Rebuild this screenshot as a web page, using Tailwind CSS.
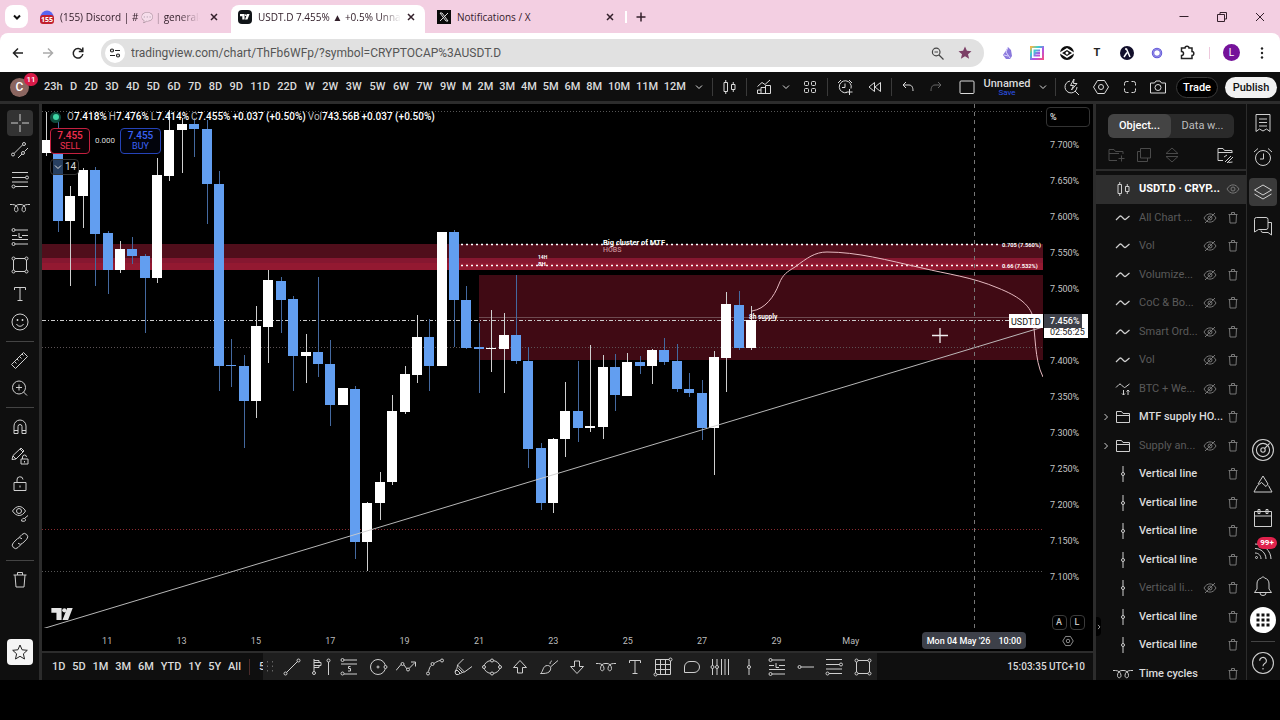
<!DOCTYPE html>
<html lang="en">
<head>
    <meta charset="UTF-8">
    <meta name="viewport" content="width=device-width, initial-scale=1.0">
    <title>USDT.D 7.455% ▲ +0.5% Unnamed</title>
    <script src="https://cdn.jsdelivr.net/npm/@tailwindcss/browser@4"></script>
</head>
<body class="bg-black h-screen overflow-hidden flex flex-col pb-10 font-['Roboto',sans-serif] text-[#dbdbdb] text-[11px] leading-4">

    <!-- Icon sprite, 20x20 grid -->
    <svg class="hidden" xmlns="http://www.w3.org/2000/svg">
        <symbol id="chevron" viewBox="0 0 20 20"><path d="M7 8.500l3 3 3-3" fill="none" stroke="currentColor"/></symbol>
        <symbol id="chevron-right" viewBox="0 0 20 20"><path d="M8.500 7l3 3-3 3" fill="none" stroke="currentColor"/></symbol>
        <symbol id="close" viewBox="0 0 20 20"><path d="M7 7l6 6M13 7l-6 6" fill="none" stroke="currentColor" stroke-width="1.500"/></symbol>
        <symbol id="cross" viewBox="0 0 20 20"><path d="M10 1v7M10 12v7M1 10h7M12 10h7" fill="none" stroke="currentColor"/></symbol>
        <symbol id="trend" viewBox="0 0 20 20"><g fill="none" stroke="currentColor"><path d="M4 12.500L12.500 4M8 17l4-4M14.500 10.500L18 7"/><circle cx="3" cy="13.500" r="1.500"/><circle cx="14" cy="3" r="1.500"/><circle cx="13" cy="12" r="1.500"/></g></symbol>
        <symbol id="fib" viewBox="0 0 20 20"><g fill="none" stroke="currentColor"><path d="M2 2.500h16M2 7.500h13.500M2 12h16M5 16.500h13"/><circle cx="17" cy="7.500" r="1.500"/><circle cx="3.500" cy="16.500" r="1.500"/></g></symbol>
        <symbol id="cycles" viewBox="0 0 20 20"><path d="M0 6.500h2.500c3.500 0 5.500 2.500 5.500 5 0 3-3.500 3-3.500 0 0-3 2-5 4.500-5h2c2.500 0 4.500 2 4.500 5 0 3-3.500 3-3.500 0 0-2.500 2-5 5.500-5H20" fill="none" stroke="currentColor"/></symbol>
        <symbol id="long" viewBox="0 0 20 20"><g fill="none" stroke="currentColor"><path d="M5 3h13M2 8.500h5M12 8.500h6M2 12.500h16M5 17h13M9 6v4.500h3"/><circle cx="3.500" cy="3" r="1.500"/><circle cx="3.500" cy="17" r="1.500"/></g></symbol>
        <symbol id="short" viewBox="0 0 20 20"><g fill="none" stroke="currentColor"><path d="M5 3h13M2 7h16M5 17h13M11.500 9.500h-2v2h2v2.500H9"/><circle cx="3.500" cy="3" r="1.500"/><circle cx="3.500" cy="16.500" r="1.500"/></g></symbol>
        <symbol id="rect" viewBox="0 0 20 20"><g fill="none" stroke="currentColor"><path d="M5 3.500h10M5 16.500h10M3.500 5v10M16.500 5v10"/><circle cx="3.500" cy="3.500" r="1.500"/><circle cx="16.500" cy="3.500" r="1.500"/><circle cx="3.500" cy="16.500" r="1.500"/><circle cx="16.500" cy="16.500" r="1.500"/></g></symbol>
        <symbol id="type" viewBox="0 0 20 20"><path d="M4.500 6V3.500h11V6M10 3.500v13M7.500 16.500h5" fill="none" stroke="currentColor"/></symbol>
        <symbol id="smile" viewBox="0 0 20 20"><g fill="none" stroke="currentColor"><circle cx="10" cy="10" r="8"/><path d="M6.500 12c1.500 3 5.500 3 7 0"/><path d="M7.500 7v2M12.500 7v2" stroke-width="1.500"/></g></symbol>
        <symbol id="ruler" viewBox="0 0 20 20"><path d="M1.500 14.500l12-12 4 4-12 12zM4.500 11.500l2 2M7 9l1.500 1.500M9.500 6.500l2 2M12 4l1.500 1.500" fill="none" stroke="currentColor"/></symbol>
        <symbol id="zoom-in" viewBox="0 0 20 20"><path d="M13.500 14l3.500 3.500M9 6.500v6M6 9.500h6M15.500 9.500a6.500 6.500 0 1 1-13 0a6.500 6.500 0 0 1 13 0z" fill="none" stroke="currentColor"/></symbol>
        <symbol id="magnet" viewBox="0 0 20 20"><path d="M4 16.500V9a6 6 0 0 1 12 0v7.500h-4V9.500a2 2 0 0 0-4 0v7zM4 13.500h4M12 13.500h4" fill="none" stroke="currentColor"/></symbol>
        <symbol id="pencil-lock" viewBox="0 0 20 20"><path d="M2 13.500l1-4 8-7.500 3 3-8 8zM10 3l3 3M3 10l3 3M11 13h7v5h-7zM12.500 13v-2a2 2 0 0 1 4 0M14.500 15v1.500" fill="none" stroke="currentColor"/></symbol>
        <symbol id="lock" viewBox="0 0 20 20"><path d="M4 8.500h12v8H4zM7 8.500V6a3 3 0 0 1 6-.5M10 11.500v2" fill="none" stroke="currentColor"/></symbol>
        <symbol id="eye-brush" viewBox="0 0 20 20"><g fill="none" stroke="currentColor"><path d="M2.500 8c4-6 9.500-6 13 0-3.500 6-9 6-13 0z"/><circle cx="9" cy="8" r="2.500"/><path d="M11.500 18c0-3 3.500-3.500 4-1.500s-2 2-4 1.500zM15 15l3-2.500"/></g></symbol>
        <symbol id="link" viewBox="0 0 20 20"><path d="M9 6.500l3-3a3.300 3.300 0 0 1 4.700 4.700l-4 4a3.300 3.300 0 0 1-4.700 0M11 13.500l-3 3a3.300 3.300 0 0 1-4.700-4.700l4-4a3.300 3.300 0 0 1 4.700 0" fill="none" stroke="currentColor"/></symbol>
        <symbol id="trash" viewBox="0 0 20 20"><path d="M3.500 5h13M5 5l1 12h8l1-12M7.500 5V2.500h5V5" fill="none" stroke="currentColor"/></symbol>
        <symbol id="star" viewBox="0 0 20 20"><path d="M10 3l2.100 4.800 5.200.5-3.900 3.500 1.100 5.200-4.500-2.700-4.500 2.700 1.100-5.200-3.900-3.500 5.200-.5z" fill="none" stroke="currentColor"/></symbol>
        <symbol id="candles" viewBox="0 0 20 20"><path d="M5 5.500h3.500v9H5zM6.750 3v2.500M6.750 14.500V17M12.500 7.500H16v5h-3.500zM14.250 5v2.500M14.250 12.500V15" fill="none" stroke="currentColor"/></symbol>
        <symbol id="indicator" viewBox="0 0 20 20"><path d="M3.500 9.500L8 5.500l3 2 5-4.500M16.500 8.500v8h-13V13H7v3.500M7 13v-2.500h4.500v6M11.500 11V8.500h5" fill="none" stroke="currentColor"/></symbol>
        <symbol id="tiles" viewBox="0 0 20 20"><g fill="none" stroke="currentColor"><rect x="4.500" y="4.500" width="4" height="4" rx="1"/><rect x="11.500" y="4.500" width="4" height="4" rx="1"/><rect x="4.500" y="11.500" width="4" height="4" rx="1"/><rect x="11.500" y="11.500" width="4" height="4" rx="1"/></g></symbol>
        <symbol id="alert-add" viewBox="0 0 20 20"><path d="M12 15.500a6 6 0 1 1 4-4M10 6.500v4H7M3 6l3-3M17 6l-3-3M14.500 12v6M11.500 15h6" fill="none" stroke="currentColor"/></symbol>
        <symbol id="rewind" viewBox="0 0 20 20"><path d="M9.500 5.500v9L4 10zM15.500 5.500v9L10 10z" fill="none" stroke="currentColor"/></symbol>
        <symbol id="undo" viewBox="0 0 20 20"><path d="M8 5L5 8l3 3M5 8h6c3 0 4 2.500 4 6" fill="none" stroke="currentColor"/></symbol>
        <symbol id="redo" viewBox="0 0 20 20"><path d="M12 5l3 3-3 3M15 8H9c-3 0-4 2.500-4 6" fill="none" stroke="currentColor"/></symbol>
        <symbol id="layout" viewBox="0 0 20 20"><rect x="3" y="4" width="14" height="12.500" rx="1" fill="none" stroke="currentColor"/></symbol>
        <symbol id="quick" viewBox="0 0 20 20"><path d="M8 4a6 6 0 1 0 7 6M13 14l4 4M12 2L8.500 8.500h3l-2 4.500L15 6.500h-3.500z" fill="none" stroke="currentColor"/></symbol>
        <symbol id="hexagon" viewBox="0 0 20 20"><path d="M6.500 3.500h7l4 6.500-4 6.500h-7L2.500 10zM12.500 10a2.500 2.500 0 1 1-5 0a2.500 2.500 0 0 1 5 0z" fill="none" stroke="currentColor"/></symbol>
        <symbol id="fullscreen" viewBox="0 0 20 20"><path d="M4.500 8.500v-2a2 2 0 0 1 2-2h2M11.500 4.500h2a2 2 0 0 1 2 2v2M15.500 11.500v2a2 2 0 0 1-2 2h-2M8.500 15.500h-2a2 2 0 0 1-2-2v-2" fill="none" stroke="currentColor"/></symbol>
        <symbol id="camera" viewBox="0 0 20 20"><path d="M2.500 6h4L8 4h4l1.500 2h4v10h-15zM13 10.500a3 3 0 1 1-6 0a3 3 0 0 1 6 0z" fill="none" stroke="currentColor"/></symbol>
        <symbol id="wave" viewBox="0 0 20 20"><path d="M3 12l3.500-3.500q1-1 2 0l2.500 2.500q1 1 2 0L16.500 8" fill="none" stroke="currentColor" stroke-width="1.200"/></symbol>
        <symbol id="wave-sort" viewBox="0 0 20 20"><path d="M3 8.500L6 5.500q1-1 2 0l2.500 2.500q1 1 2 0L16.500 5M10.500 11v5M9 14.500l1.500 1.500 1.500-1.500M15 16v-5M13.500 12.500L15 11l1.500 1.500" fill="none" stroke="currentColor"/></symbol>
        <symbol id="folder" viewBox="0 0 20 20"><path d="M3.500 15.500v-11h5l1.500 2h6.500v9zM3.500 8.500h13" fill="none" stroke="currentColor"/></symbol>
        <symbol id="vline" viewBox="0 0 20 20"><path d="M10 2v6.500M10 11.500V18M11.500 10a1.500 1.500 0 1 1-3 0a1.500 1.500 0 0 1 3 0z" fill="none" stroke="currentColor"/></symbol>
        <symbol id="eye" viewBox="0 0 20 20"><path d="M4 10c3-5.500 9-5.500 12 0-3 5.500-9 5.500-12 0zM12 10a2 2 0 1 1-4 0a2 2 0 0 1 4 0z" fill="none" stroke="currentColor"/></symbol>
        <symbol id="eye-off" viewBox="0 0 20 20"><path d="M4 10c3-5.500 9-5.500 12 0-3 5.500-9 5.500-12 0zM12 10a2 2 0 1 1-4 0a2 2 0 0 1 4 0zM5 15L15 5" fill="none" stroke="currentColor"/></symbol>
        <symbol id="trash-sm" viewBox="0 0 20 20"><path d="M5.500 6.500h9M6.500 6.500l.5 8.500h6l.5-8.500M8.500 6.500v-2h3v2" fill="none" stroke="currentColor"/></symbol>
        <symbol id="folder-add" viewBox="0 0 20 20"><path d="M11 15.500H3v-11h5l1.500 2h7.500V9M3 8.500h10M15.500 10.500v6M12.500 13.500h6" fill="none" stroke="currentColor"/></symbol>
        <symbol id="copy" viewBox="0 0 20 20"><path d="M6.500 3.500h10v9.500h-10zM6.500 6.500h-3v10h10V13" fill="none" stroke="currentColor"/></symbol>
        <symbol id="sort" viewBox="0 0 20 20"><path d="M4 8.500L10 3l6 5.500zM4 11.500h12L10 17z" fill="none" stroke="currentColor"/></symbol>
        <symbol id="folder-edit" viewBox="0 0 20 20"><path d="M8 15.500H3v-12h5l1.500 2h7.500V8M3 7.500h14M9 12l3-2M10 17l6-6M12 18l6-6M13.500 17.500l4-.5" fill="none" stroke="currentColor"/></symbol>
        <symbol id="watchlist" viewBox="0 0 20 20"><path d="M3 1.500h14v17L13.500 16 10 18l-3.500-2L3 18.500zM6 6h8M6 9.500h8M6 13h8" fill="none" stroke="currentColor"/></symbol>
        <symbol id="clock" viewBox="0 0 20 20"><path d="M17.500 11a7.500 7.500 0 1 1-15 0a7.500 7.500 0 0 1 15 0zM10.500 6.500V12H7M1 5l4-3.500M19 5l-4-3.500" fill="none" stroke="currentColor"/></symbol>
        <symbol id="layers" viewBox="0 0 20 20"><path d="M10 3l8.500 5-8.500 5-8.500-5zM1.500 12l8.500 5 8.500-5" fill="none" stroke="currentColor"/></symbol>
        <symbol id="chat" viewBox="0 0 20 20"><path d="M3.500 1.500h9.500a2 2 0 0 1 2 2v8a2 2 0 0 1-2 2H5.500l-4 2.500V3.500a2 2 0 0 1 2-2zM15 6.500h3.500V19L15 16.500h-5a2 2 0 0 1-2-2" fill="none" stroke="currentColor"/></symbol>
        <symbol id="radar" viewBox="0 0 20 20"><g fill="none" stroke="currentColor"><circle cx="10" cy="10" r="9.500"/><circle cx="10" cy="10" r="6"/><circle cx="10" cy="10" r="2"/><path d="M11.500 8.500L16 4"/></g></symbol>
        <symbol id="pyramid" viewBox="0 0 20 20"><path d="M10 2l5 8M10 2L5 10M4.500 11.500L1 18h18l-3.500-6.500M4.500 11.500l4-3 4.500 4 2-2.500" fill="none" stroke="currentColor"/></symbol>
        <symbol id="calendar" viewBox="0 0 20 20"><path d="M1.500 3.500h17v15h-17zM1.500 8h17M5 1.500h2v4H5zM13 1.500h2v4h-2z" fill="none" stroke="currentColor"/></symbol>
        <symbol id="feed" viewBox="0 0 20 20"><path d="M2 2c9 0 16 7 16 15M2 6.500c6 0 11 4.500 11 10.500M2 11c3.500 0 6 2.500 6 6M4.500 15.500a1 1 0 1 1-2 0a1 1 0 0 1 2 0z" fill="none" stroke="currentColor"/></symbol>
        <symbol id="bell" viewBox="0 0 20 20"><path d="M1.500 16.500h17L16 13V8a6 6 0 0 0-4.500-6L10 .5 8.500 2A6 6 0 0 0 4 8v5zM7 17a3 2.500 0 0 0 6 0" fill="none" stroke="currentColor"/></symbol>
        <symbol id="help" viewBox="0 0 20 20"><path d="M19.500 10a9.500 9.500 0 1 1-19 0a9.500 9.500 0 0 1 19 0zM7 8a3 3 0 1 1 4.500 2.500Q10 11.500 10 13M10 14.500V16" fill="none" stroke="currentColor"/></symbol>
        <symbol id="segment" viewBox="0 0 20 20"><path d="M4.500 15.500l11-11M5 16.500a1.500 1.500 0 1 1-3 0a1.500 1.500 0 0 1 3 0zM18 3.500a1.500 1.500 0 1 1-3 0a1.500 1.500 0 0 1 3 0z" fill="none" stroke="currentColor"/></symbol>
        <symbol id="profile" viewBox="0 0 20 20"><path d="M3 2v12.500M3 3.500h5v2H3M3 5.500h7v3H3M3 8.500h5v2H3M4.500 16a1.500 1.500 0 1 1-3 0a1.500 1.500 0 0 1 3 0zM17.500 5v13M19 3.500a1.500 1.500 0 1 1-3 0a1.500 1.500 0 0 1 3 0z" fill="none" stroke="currentColor"/></symbol>
        <symbol id="target" viewBox="0 0 20 20"><g fill="none" stroke="currentColor"><circle cx="10" cy="10" r="7.500"/><circle cx="10" cy="10" r="1"/><circle cx="17.500" cy="10" r="1.500" fill="#1e1e1e"/></g></symbol>
        <symbol id="zigzag" viewBox="0 0 20 20"><g fill="none" stroke="currentColor"><path d="M0 13.500l5-6M8 8l3 4M13 11.500l6-6M15 5h4.500v4.500"/><circle cx="6.500" cy="7" r="1.500"/><circle cx="12" cy="12.500" r="1.500"/></g></symbol>
        <symbol id="curve" viewBox="0 0 20 20"><g fill="none" stroke="currentColor"><path d="M3.500 14.500C4.500 11 5 9 6.500 8.500M9 6.500c2-1.500 4-2.500 6-3"/><circle cx="3" cy="16.500" r="1.500"/><circle cx="7.500" cy="7" r="1.500"/><circle cx="17" cy="3.500" r="1.500"/></g></symbol>
        <symbol id="marker" viewBox="0 0 20 20"><path d="M10.500 2L4.500 8l7 7L19 9.500M4.500 8c0 3-1 4-2.500 6.500M11.500 15c-2 0-3 1-5 2M2 15l2-2 3 3-1.500 1.500H3zM5.500 11.500l3.500 3.500" fill="none" stroke="currentColor"/></symbol>
        <symbol id="ellipse" viewBox="0 0 20 20"><g fill="none" stroke="currentColor"><ellipse cx="10" cy="10" rx="8" ry="6.500"/><g fill="#1e1e1e"><circle cx="10" cy="3.500" r="1.500"/><circle cx="10" cy="16.500" r="1.500"/><circle cx="2" cy="10" r="1.500"/><circle cx="18" cy="10" r="1.500"/></g></g></symbol>
        <symbol id="arrow-up" viewBox="0 0 20 20"><path d="M10 3.500l6.500 7h-4v5.500h-5v-5.500h-4z" fill="none" stroke="currentColor"/></symbol>
        <symbol id="arrow-down" viewBox="0 0 20 20"><path d="M10 16.500l6.500-7h-4V4h-5v5.500h-4z" fill="none" stroke="currentColor"/></symbol>
        <symbol id="brush" viewBox="0 0 20 20"><path d="M1.500 16.500c3-2 2-8 7-8 4 0 4 4 1.500 6.500-2 1.500-5 1.500-8.500 1.500zM11 7c0-2 1-3 2-3M12 9.500l7-6" fill="none" stroke="currentColor"/></symbol>
        <symbol id="grid" viewBox="0 0 20 20"><g fill="none" stroke="currentColor"><path d="M2.500 2.500h15v15h-15zM7.500 2.500v15M12.500 2.500v15M2.500 7.500h15M2.500 12.500h15"/><g fill="#1e1e1e"><circle cx="17.500" cy="2.500" r="1.500"/><circle cx="2.500" cy="17.500" r="1.500"/></g></g></symbol>
        <symbol id="bubble" viewBox="0 0 20 20"><path d="M2.500 15.500V10a5.500 5.500 0 0 1 5.500-5.500h4a5.500 5.500 0 0 1 0 11z" fill="none" stroke="currentColor"/></symbol>
        <symbol id="bars" viewBox="0 0 20 20"><g fill="none" stroke="currentColor"><path d="M2.500 2v16M7 2v16M11.500 2v16M15 2v16M18.500 2v16"/><g fill="#1e1e1e"><circle cx="2.500" cy="10" r="1.500"/><circle cx="7" cy="10" r="1.500"/></g></g></symbol>
        <symbol id="ray" viewBox="0 0 20 20"><path d="M5 10h13M5 10a1.500 1.500 0 1 1-3 0a1.500 1.500 0 0 1 3 0z" fill="none" stroke="currentColor"/></symbol>
        <symbol id="tv" viewBox="0 0 24 14"><path d="M0 0h11v13H5.500V5H0zM17 0h6l-5 13h-6z" fill="currentColor"/><circle cx="14" cy="2.500" r="2.300" fill="currentColor"/></symbol>
    </svg>

    <!-- Browser tabs -->
    <header class="bg-[#f3cfe2] text-[#33202b]">
        <div class="h-[33px] flex items-stretch font-['Open_Sans',sans-serif]">
            <button class="m-[5px] mb-0 h-[23px] w-[23px] rounded-lg bg-white flex items-center justify-center" aria-label="Search tabs">
                <svg class="size-5" viewBox="0 0 20 20"><path d="M7 8.500l3 3 3-3" fill="none" stroke="#111" stroke-width="2"/></svg>
            </button>
            <div class="w-[198px] pl-[6px] flex items-center">
                <svg class="size-4 shrink-0" viewBox="0 0 16 16"><circle cx="8" cy="8" r="6.500" fill="#5865f2"/><rect x="1" y="6" width="14" height="9" rx="3" fill="#c11f2e"/><text x="8" y="13" font-size="7" font-weight="700" text-anchor="middle" fill="#fff">155</text></svg>
                <span class="ml-[5px] w-[140px] whitespace-nowrap overflow-hidden text-[10px] mask-r-from-85%">(155) Discord | # <span class="opacity-30">💬</span> <span class="opacity-40">|</span> general-c</span>
                <button class="ml-1" aria-label="Close tab"><svg class="size-5"><use href="#close"/></svg></button>
            </div>
            <div class="w-[194px] mt-[5px] pl-[7px] bg-white rounded-t-lg flex items-center pb-1">
                <span class="size-[14px] shrink-0 rounded-sm bg-[#101418] text-white flex items-center justify-center"><svg class="w-[10px] h-[6px]"><use href="#tv"/></svg></span>
                <span class="ml-[6px] w-[143px] whitespace-nowrap overflow-hidden text-[10px] mask-r-from-85%">USDT.D 7.455% ▲ +0.5% Unnam</span>
                <button aria-label="Close tab"><svg class="size-5"><use href="#close"/></svg></button>
            </div>
            <div class="w-[200px] pl-3 flex items-center">
                <svg class="size-[14px] shrink-0" viewBox="0 0 14 14"><path d="M0 0h14v14H0z" fill="#0a0a0a"/><path d="M3 3h2l6 8H9zM11 3L3 11" fill="none" stroke="#ddd"/></svg>
                <span class="ml-[6px] flex-1 text-[10px]">Notifications / X</span>
                <button class="mr-[5px]" aria-label="Close tab"><svg class="size-5"><use href="#close"/></svg></button>
            </div>
            <div class="w-[2px] h-3 my-auto bg-white"></div>
            <button class="ml-1" aria-label="New tab"><svg class="size-5" viewBox="0 0 20 20"><path d="M10 5.500v9M5.500 10h9" stroke="currentColor" stroke-width="1.500"/></svg></button>
            <div class="ml-auto mr-[10px] flex items-center gap-[18px]">
                <button aria-label="Minimize"><svg class="size-5" viewBox="0 0 20 20"><path d="M5.500 9.500h9" stroke="currentColor"/></svg></button>
                <button aria-label="Restore"><svg class="size-5" viewBox="0 0 20 20"><path d="M5.500 7.500h7v7h-7zM8 7V5.500h6.500V12H13" fill="none" stroke="currentColor"/></svg></button>
                <button aria-label="Close window"><svg class="size-5" viewBox="0 0 20 20"><path d="M6 6l8 8M14 6l-8 8" stroke="currentColor"/></svg></button>
            </div>
        </div>

        <!-- Address bar -->
        <div class="h-[39px] bg-white rounded-t-lg flex items-center pl-2 text-[#222]">
            <div class="flex gap-[10px]">
                <button aria-label="Back"><svg class="size-5" viewBox="0 0 20 20"><path d="M15 10H6M10 5.500L5.500 10l4.500 4.500" fill="none" stroke="currentColor" stroke-width="1.500"/></svg></button>
                <button class="text-[#aaa]" aria-label="Forward"><svg class="size-5" viewBox="0 0 20 20"><path d="M5 10h9M10 5.500l4.500 4.500-4.500 4.500" fill="none" stroke="currentColor" stroke-width="1.500"/></svg></button>
                <button aria-label="Reload"><svg class="size-5" viewBox="0 0 20 20"><path d="M14 7.500A4.800 4.800 0 1 0 14.800 11M14.800 4.500v4h-4" fill="none" stroke="currentColor" stroke-width="1.500"/></svg></button>
            </div>
            <div class="ml-[13px] h-7 flex-1 bg-[#e1e1e1] rounded-full flex items-center px-1">
                <button class="size-5 rounded-full bg-white" aria-label="Site information"><svg class="size-5" viewBox="0 0 20 20"><g fill="none" stroke="#222" stroke-width="1.200"><circle cx="7" cy="7.500" r="1.500"/><path d="M10 7.500h5M5 12.500h5"/><circle cx="13" cy="12.500" r="1.500"/></g></svg></button>
                <input class="ml-[6px] flex-1 bg-transparent outline-none text-xs text-[#555]" aria-label="Address" value="tradingview.com/chart/ThFb6WFp/?symbol=CRYPTOCAP%3AUSDT.D">
                <button aria-label="Zoom"><svg class="size-5" viewBox="0 0 20 20"><path d="M12 9a3.800 3.800 0 1 1-7.600 0a3.800 3.800 0 0 1 7.600 0zM11 12l4.500 4.500M6.500 9h3.500" fill="none" stroke="#444" stroke-width="1.200"/></svg></button>
                <button class="ml-[7px] mr-[5px]" aria-label="Bookmark"><svg class="size-5" viewBox="0 0 20 20"><path d="M10 3.500l1.900 4.300 4.600.4-3.500 3 1.100 4.600L10 13.300l-4.100 2.500L7 11.200l-3.500-3 4.600-.4z" fill="#7c3f66"/></svg></button>
            </div>
            <div class="ml-[13px] mr-2 flex items-center gap-[10px]">
                <svg class="size-5" viewBox="0 0 20 20"><path d="M11 4l3 3 1 6-2 3-4 0-3-4 2-3z" fill="#8a78dc"/><path d="M11 4l-2 5 4 6M7 12l4 1" stroke="#ddd6ff" fill="none"/></svg>
                <svg class="size-5" viewBox="0 0 20 20"><linearGradient id="lg" x1="0" y1="0" x2="1" y2="1"><stop offset="0" stop-color="#f7b64a"/><stop offset=".3" stop-color="#35d2d2"/><stop offset=".6" stop-color="#b052e8"/><stop offset="1" stop-color="#f0508a"/></linearGradient><path d="M4 4h12v12H4zM13 7.500H7.500v5H13M7.500 10H13" fill="#fff" stroke="url(#lg)" stroke-width="2"/></svg>
                <svg class="size-5" viewBox="0 0 20 20"><circle cx="10" cy="10" r="7" fill="#0d0d0d"/><path d="M3.500 10L10 6l6.500 4L10 14z" fill="none" stroke="#fff" stroke-width="1.500"/><circle cx="10" cy="10" r="1.500" fill="#fff"/></svg>
                <span class="w-5 text-center text-[11px] font-bold">T</span>
                <svg class="size-5" viewBox="0 0 20 20"><circle cx="10" cy="10" r="7" fill="#120f2b"/><path d="M8 6h1.500l3.500 8M10 9.500L7 14" fill="none" stroke="#fff" stroke-width="1.500"/></svg>
                <svg class="size-5" viewBox="0 0 20 20"><circle cx="10" cy="10" r="4" fill="none" stroke="#6157d6" stroke-width="2.500"/><circle cx="10" cy="10" r="4" fill="none" stroke="#b5b0f5" stroke-width=".6"/></svg>
                <svg class="size-5" viewBox="0 0 20 20"><path d="M4.500 5h3.500a2 1.800 0 0 1 4 0h3v3.500a1.800 2 0 0 1 0 4V15.500H4.500v-3a2 2 0 0 0 0-4z" fill="none" stroke="#222" stroke-width="1.500"/></svg>
                <div class="ml-[2px] w-px h-3 bg-[#eec9dd]"></div>
                <span class="ml-[3px] size-[17px] rounded-full bg-[#75129a] text-white text-[10px] flex items-center justify-center">L</span>
                <svg class="size-5 ml-[2px]" viewBox="0 0 20 20"><g fill="#222"><circle cx="10" cy="5.500" r="1.200"/><circle cx="10" cy="10" r="1.200"/><circle cx="10" cy="14.500" r="1.200"/></g></svg>
            </div>
        </div>
    </header>

    <!-- Chart top toolbar -->
    <nav class="h-8 border-b-3 border-[#2c2c2c] bg-[#0f0f0f] pt-px flex items-center font-medium">
        <div class="relative ml-[10px] size-[19px] shrink-0 rounded-full bg-[#8b6660] text-white text-xs flex items-center justify-center">C
            <span class="absolute -top-[5px] left-[14px] h-[13px] w-[14px] rounded-full bg-[#d81b48] text-[8px] leading-[13px] text-center">11</span>
        </div>
        <div id="days" class="ml-[15px] w-[253px] shrink-0 flex justify-between"></div>
        <div id="weeks" class="ml-2 w-[151px] shrink-0 flex justify-between"></div>
        <div id="months" class="ml-[6px] w-[224px] shrink-0 flex justify-between"></div>
        <button class="ml-[3px]" aria-label="More intervals"><svg class="size-5"><use href="#chevron"/></svg></button>
        <div class="mx-[3px] w-px h-[18px] bg-[#3a3a3a]"></div>
        <button class="mx-[3px]" aria-label="Chart type"><svg class="size-5"><use href="#candles"/></svg></button>
        <div class="mx-[4px] w-px h-[18px] bg-[#3a3a3a]"></div>
        <button class="ml-[3px]" aria-label="Indicators"><svg class="size-5"><use href="#indicator"/></svg></button>
        <button class="ml-[2px]" aria-label="Favorites"><svg class="size-5"><use href="#chevron"/></svg></button>
        <button class="ml-1" aria-label="Templates"><svg class="size-5"><use href="#tiles"/></svg></button>
        <div class="mx-[7px] w-px h-[18px] bg-[#3a3a3a]"></div>
        <button aria-label="Create alert"><svg class="size-5"><use href="#alert-add"/></svg></button>
        <button class="ml-[10px]" aria-label="Replay"><svg class="size-5"><use href="#rewind"/></svg></button>
        <div class="mx-[6px] w-px h-[18px] bg-[#3a3a3a]"></div>
        <button aria-label="Undo"><svg class="size-5"><use href="#undo"/></svg></button>
        <button class="ml-2 text-[#666]" aria-label="Redo"><svg class="size-5"><use href="#redo"/></svg></button>
        <div class="ml-auto pr-[3px] flex items-center">
            <button aria-label="Layout"><svg class="size-5"><use href="#layout"/></svg></button>
            <button class="ml-2 w-[44px] flex flex-col items-center text-[11px] leading-[11px]">Unnamed<span class="text-[8px] leading-2 font-normal text-[#2d55f0]">Save</span></button>
            <button class="ml-1" aria-label="Manage layouts"><svg class="size-5"><use href="#chevron"/></svg></button>
            <div class="ml-[2px] mr-[6px] w-px h-[18px] bg-[#3a3a3a]"></div>
            <button aria-label="Quick search"><svg class="size-5"><use href="#quick"/></svg></button>
            <button class="ml-[9px]" aria-label="Settings"><svg class="size-5"><use href="#hexagon"/></svg></button>
            <button class="ml-[9px]" aria-label="Fullscreen"><svg class="size-5"><use href="#fullscreen"/></svg></button>
            <button class="ml-2" aria-label="Snapshot"><svg class="size-5"><use href="#camera"/></svg></button>
            <button class="ml-2 w-[42px] h-[21px] rounded-full border border-[#3a3a3a] bg-black text-[11px] leading-none text-white">Trade</button>
            <button class="ml-[7px] w-[52px] h-[21px] rounded-full bg-[#f2f2f2] text-[11px] leading-none text-[#111]">Publish</button>
        </div>
    </nav>

    <main class="flex-1 min-h-0 flex">
        <!-- Drawing tools -->
        <aside class="w-[42px] border-r-3 border-[#2c2c2c] bg-[#0f0f0f] pt-[6px] pb-[15px] flex flex-col items-center text-[#cfcfcf]">
            <div class="h-[225px] flex flex-col justify-between">
                <button class="size-[26px] rounded bg-[#333] flex items-center justify-center" aria-label="Cross"><svg class="size-5"><use href="#cross"/></svg></button>
                <button class="size-[26px] flex items-center justify-center" aria-label="Trend line"><svg class="size-5"><use href="#trend"/></svg></button>
                <button class="size-[26px] flex items-center justify-center" aria-label="Fib retracement"><svg class="size-5"><use href="#fib"/></svg></button>
                <button class="size-[26px] flex items-center justify-center" aria-label="Time cycles"><svg class="size-5"><use href="#cycles"/></svg></button>
                <button class="size-[26px] flex items-center justify-center" aria-label="Long position"><svg class="size-5"><use href="#long"/></svg></button>
                <button class="size-[26px] flex items-center justify-center" aria-label="Rectangle"><svg class="size-5"><use href="#rect"/></svg></button>
                <button class="size-[26px] flex items-center justify-center" aria-label="Text"><svg class="size-5"><use href="#type"/></svg></button>
                <button class="size-[26px] flex items-center justify-center" aria-label="Icons"><svg class="size-5"><use href="#smile"/></svg></button>
            </div>
            <div class="mt-[6px] mb-[5px] w-7 h-px bg-[#444]"></div>
            <div class="h-[54px] flex flex-col justify-between">
                <button class="size-[26px] flex items-center justify-center" aria-label="Measure"><svg class="size-5"><use href="#ruler"/></svg></button>
                <button class="size-[26px] flex items-center justify-center" aria-label="Zoom in"><svg class="size-5"><use href="#zoom-in"/></svg></button>
            </div>
            <div class="my-[6px] w-7 h-px bg-[#444]"></div>
            <div class="h-[140px] flex flex-col justify-between">
                <button class="size-[26px] flex items-center justify-center" aria-label="Magnet"><svg class="size-5"><use href="#magnet"/></svg></button>
                <button class="size-[26px] flex items-center justify-center" aria-label="Stay in drawing mode"><svg class="size-5"><use href="#pencil-lock"/></svg></button>
                <button class="size-[26px] flex items-center justify-center" aria-label="Lock drawings"><svg class="size-5"><use href="#lock"/></svg></button>
                <button class="size-[26px] flex items-center justify-center" aria-label="Hide drawings"><svg class="size-5"><use href="#eye-brush"/></svg></button>
                <button class="size-[26px] flex items-center justify-center" aria-label="Sync drawings"><svg class="size-5"><use href="#link"/></svg></button>
            </div>
            <div class="my-[6px] w-7 h-px bg-[#444]"></div>
            <button class="size-[26px] flex items-center justify-center" aria-label="Remove"><svg class="size-5"><use href="#trash"/></svg></button>
            <button class="mt-auto size-[26px] rounded bg-[#f5f5f5] text-[#222] flex items-center justify-center" aria-label="Favorite tools"><svg class="size-5"><use href="#star"/></svg></button>
        </aside>

        <!-- Chart -->
        <section class="flex-1 min-w-0 flex flex-col">
            <div class="flex-1 min-h-0 flex">
                <div class="relative flex-1 min-w-0 flex flex-col">
                    <svg class="w-full flex-1 min-h-0" viewBox="42 104 1001 525" preserveAspectRatio="xMinYMin slice">
                        <!-- supply zones -->
                        <path d="M42 244h1001v14H42z" fill="#500e1b"/>
                        <path d="M42 258h1001v5H42z" fill="#861730"/>
                        <path d="M42 263h1001v7H42z" fill="#931931"/>
                        <path d="M479 275h564v85H479z" fill="#400a14"/>
                        <path d="M479 317.500h564" stroke="#6e4a50"/>
                        <g stroke-dasharray="1 2">
                            <path d="M42 111.500h1001" stroke="#555"/>
                            <path d="M42 347.500h1001" stroke="#5c5356"/>
                            <path d="M42 529.500h1001" stroke="#8a2a30"/>
                            <path d="M42 571.500h1001" stroke="#555"/>
                        </g>
                        <path d="M42 320.500h967" stroke="#ccc" stroke-dasharray="4 2 1 2"/>
                        <path d="M461 244.500h540M461 265.500h540" stroke="#fff" stroke-width="1.500" stroke-dasharray="2 3"/>
                        <g id="candles-layer"></g>
                        <path d="M42 629L1043 327" stroke="#ccc" stroke-width=".9"/>
                        <path d="M752 311c13-2 22-14 27-27 4-10 8-12 16-17 12-9 20-15 32-15 30 0 60 8 95 16 25 6 50 9 76 20 20 8 30 16 34 26 4 20 2 45 11 63" fill="none" stroke="#e5b9c0"/>
                        <path d="M974.500 104v524" stroke="#777" stroke-dasharray="4 4"/>
                        <path d="M940 328v15M932 335.500h16" stroke="#eee" stroke-width="1.300"/>
                        <g fill="#fff" font-weight="700">
                            <text x="603" y="245" font-size="7.500">Big cluster of MTF</text>
                            <text x="603" y="252" font-size="7" font-weight="500" fill="#c98c96">HOBS</text>
                            <text x="538" y="259" font-size="5">14H</text>
                            <text x="538" y="266" font-size="6">8H</text>
                            <text x="749" y="319" font-size="6.500">8h supply</text>
                            <text x="1002" y="247" font-size="5.700">0.705 (7.560%)</text>
                            <text x="1002" y="268" font-size="5.700">0.66 (7.532%)</text>
                        </g>
                        <path d="M1009 314h34v14h-34z" fill="#fff"/>
                        <text x="1011" y="325" font-size="9" fill="#111">USDT.D</text>
                    </svg>

                    <!-- legend -->
                    <div class="absolute left-2 top-[5px] flex flex-col">
                        <div class="flex items-center gap-[2px] text-[10px] leading-4 font-medium text-white whitespace-nowrap">
                            <span class="mr-1 size-[11px] rounded-full bg-[#0d4a3b] flex items-center justify-center"><span class="size-[6px] rounded-full bg-[#3fd6a4]"></span></span>
                            <span><span class="font-normal text-[#bbb]">O</span>7.418%</span>
                            <span><span class="font-normal text-[#bbb]">H</span>7.476%</span>
                            <span><span class="font-normal text-[#bbb]">L</span>7.414%</span>
                            <span><span class="font-normal text-[#bbb]">C</span>7.455%</span>
                            <span>+0.037 (+0.50%)</span>
                            <span><span class="font-normal text-[#bbb]">Vol</span>743.56B</span>
                            <span>+0.037 (+0.50%)</span>
                        </div>
                        <div class="mt-[3px] flex items-center text-[9px] leading-[10px]">
                            <button class="w-10 h-[26px] rounded border border-[#c4203f] bg-[#0b0206] text-[#f0304f] flex flex-col items-center justify-center"><span class="font-medium text-[10px]">7.455</span>SELL</button>
                            <span class="w-[30px] text-center text-[8px]">0.000</span>
                            <button class="w-[41px] h-[26px] rounded border border-[#2543b8] bg-[#02040c] text-[#3a62f5] flex flex-col items-center justify-center"><span class="font-medium text-[10px]">7.455</span>BUY</button>
                        </div>
                        <button class="mt-[5px] w-[29px] h-4 rounded-sm border border-[#333] bg-black/60 flex items-center text-[10px]"><svg class="w-[14px] h-4" viewBox="3 2 14 16"><use href="#chevron" width="20" height="20"/></svg>14</button>
                    </div>
                    <svg class="absolute left-[9px] bottom-[30px] w-[23px] h-[13px] text-[#e5e5e5]"><use href="#tv"/></svg>

                    <!-- time axis -->
                    <div class="h-[23px] pt-[2px] flex items-center text-[9px] leading-3 text-[#bdbdbd]">
                        <div class="ml-7 w-[818px] grid grid-cols-11 text-center">
                            <span>11</span><span>13</span><span>15</span><span>17</span><span>19</span><span>21</span><span>23</span><span>25</span><span>27</span><span>29</span><span>May</span>
                        </div>
                    </div>
                    <div class="absolute left-[880px] bottom-[2px] w-[104px] h-[17px] rounded-sm bg-[#3d4049] text-white text-[9px] leading-[18px] font-medium flex justify-center gap-2"><span>Mon 04 May '26</span><span>10:00</span></div>
                </div>

                <!-- price axis -->
                <div class="w-[50px] pt-[3px] flex flex-col text-[9px] text-[#c4c4c4]">
                    <select class="mx-[3px] h-5 appearance-none rounded border border-[#333] bg-black px-[3px] text-[9px] leading-none text-white" aria-label="Scale unit"><option>%</option></select>
                    <div id="prices" class="flex flex-col leading-9"></div>
                    <div class="mt-auto mb-1 flex justify-center gap-[3px] font-medium">
                        <button class="size-[15px] rounded-sm border border-[#3a3a3a] leading-none text-[9px]">A</button>
                        <button class="size-[15px] rounded-sm border border-[#3a3a3a] leading-none text-[9px]">L</button>
                    </div>
                    <button class="mb-[3px] self-center" aria-label="Axis settings"><svg class="size-[14px]"><use href="#hexagon"/></svg></button>
                </div>
            </div>

            <!-- bottom bar -->
            <footer class="h-[29px] border-t-2 border-[#2c2c2c] bg-[#0f0f0f] flex items-center font-medium">
                <div class="ml-[10px] w-[189px] shrink-0 flex justify-between">
                    <button>1D</button><button>5D</button><button>1M</button><button>3M</button><button>6M</button><button>YTD</button><button>1Y</button><button>5Y</button><button>All</button>
                </div>
                <div class="ml-2 w-px h-4 bg-[#4a2b2b]"></div>
                <div class="ml-[9px] w-1 overflow-hidden">5</div>
                <div class="h-full bg-[#1e1e1e] pl-[3px] pr-1 flex items-center text-[#cfcfcf]">
                    <svg class="w-2 h-4 mr-2 text-[#666]" viewBox="0 0 8 16"><path d="M1.500 2v12M6.500 2v12" stroke="currentColor" stroke-dasharray="1.500 3"/></svg>
                    <div id="favorites" class="w-[591px] flex justify-between"></div>
                </div>
                <span class="ml-auto mr-2 text-[10px]">15:03:35 UTC+10</span>
            </footer>
        </section>

        <!-- Object tree -->
        <aside class="relative w-[154px] border-l-3 border-r border-l-[#2c2c2c] border-r-[#2c2c2c] bg-[#0f0f0f] pt-[10px] flex flex-col overflow-hidden">
            <div class="mx-3 h-6 shrink-0 rounded-md bg-[#2a2a2a] grid grid-cols-2 text-[11px]">
                <button class="rounded-md bg-[#444] text-white font-medium">Object...</button>
                <button class="text-[#bdbdbd]">Data w...</button>
            </div>
            <div class="mt-[7px] ml-[10px] mr-[11px] flex items-center gap-2 text-[#4a4a4a]">
                <button aria-label="New folder"><svg class="size-5"><use href="#folder-add"/></svg></button>
                <button aria-label="Clone"><svg class="size-5"><use href="#copy"/></svg></button>
                <button aria-label="Move"><svg class="size-5"><use href="#sort"/></svg></button>
                <button class="ml-auto text-[#cfcfcf]" aria-label="Manage objects"><svg class="size-5"><use href="#folder-edit"/></svg></button>
            </div>
            <div class="my-1 h-[2px] shrink-0 bg-[#2c2c2c]"></div>
            <ul id="objects" class="h-[513px] shrink-0 grid auto-rows-fr"></ul>
            <button class="absolute left-0 bottom-11 w-[5px] h-[19px] rounded-r-sm bg-black flex items-center justify-center overflow-hidden" aria-label="Collapse panel"><svg class="size-[14px] shrink-0"><use href="#chevron-right"/></svg></button>
        </aside>

        <!-- Widget rail -->
        <aside class="w-[33px] bg-[#0f0f0f] pt-[5px] pb-[3px] pr-px flex flex-col items-center text-[#cfcfcf]">
            <div class="h-[131px] flex flex-col justify-between">
                <button class="size-7 flex items-center justify-center" aria-label="Watchlist"><svg class="size-5"><use href="#watchlist"/></svg></button>
                <button class="size-7 flex items-center justify-center" aria-label="Alerts"><svg class="size-5"><use href="#clock"/></svg></button>
                <button class="size-7 rounded bg-[#3a3a3a] flex items-center justify-center" aria-label="Object tree"><svg class="size-5"><use href="#layers"/></svg></button>
                <button class="size-7 flex items-center justify-center" aria-label="Chats"><svg class="size-5"><use href="#chat"/></svg></button>
            </div>
            <div class="mt-auto h-[198px] flex flex-col justify-between">
                <button class="size-7 flex items-center justify-center" aria-label="Screener"><svg class="size-[22px]"><use href="#radar"/></svg></button>
                <button class="size-7 flex items-center justify-center" aria-label="Pine"><svg class="size-5"><use href="#pyramid"/></svg></button>
                <button class="size-7 flex items-center justify-center" aria-label="Calendar"><svg class="size-5"><use href="#calendar"/></svg></button>
                <button class="relative size-7 flex items-center justify-center" aria-label="News"><svg class="size-5"><use href="#feed"/></svg><span class="absolute -top-[1px] left-2 w-5 h-3 rounded-full bg-[#e0224c] text-white text-[8px] leading-3 font-bold">99+</span></button>
                <button class="size-7 flex items-center justify-center" aria-label="Notifications"><svg class="size-5"><use href="#bell"/></svg></button>
                <button class="size-7 flex items-center justify-center" aria-label="Products"><svg class="size-[26px]" viewBox="0 0 26 26"><circle cx="13" cy="13" r="13" fill="#fff"/><path d="M6.500 8h13M6.500 13h13M6.500 18h13" stroke="#111" stroke-width="3" stroke-dasharray="3 2"/></svg></button>
            </div>
            <div class="my-[7px] w-6 h-px bg-[#444]"></div>
            <button class="size-7 flex items-center justify-center" aria-label="Help"><svg class="size-[22px]"><use href="#help"/></svg></button>
        </aside>
    </main>

    <script>
        const intervals = {
            days: '23h D 2D 3D 4D 5D 6D 7D 8D 9D 11D 22D',
            weeks: 'W 2W 3W 5W 6W 7W 9W',
            months: 'M 2M 3M 4M 5M 6M 8M 10M 11M 12M'
        };
        for (const [id, list] of Object.entries(intervals)) {
            document.getElementById(id).innerHTML = list.split(' ').map(i => `<button>${i}</button>`).join('');
        }

        // [up, body top, body bottom, wick top, wick bottom]
        const candles = [
            [1,140,153,112,156],[0,140,221,118,232],[1,196,221,186,286],[1,170,196,168,228],[0,170,234,167,286],
            [0,233,270,231,294],[1,249,270,241,273],[0,249,256,237,264],[0,256,278,254,333],[1,175,278,158,283],
            [1,130,176,110,181],[1,124,130,118,173],[0,124,129,118,157],[0,129,184,120,224],[0,184,366,171,391],
            [0,365,366,339,387],[0,366,401,355,448],[1,326,401,306,418],[1,280,327,270,363],[0,281,300,277,333],
            [0,299,356,296,391],[1,352,356,334,383],[0,352,364,277,377],[0,364,405,340,426],[1,388,405,388,405],
            [0,389,542,386,559],[1,503,542,502,571],[1,482,503,472,520],[1,411,482,395,485],[1,374,412,366,414],
            [1,337,375,315,383],[0,337,366,319,391],[1,232,366,232,366],[0,232,300,230,347],[0,300,348,286,349],
            [0,347,349,323,393],[1,348,349,310,372],[1,335,349,313,393],[0,335,361,275,364],[0,361,449,347,468],
            [0,448,503,443,510],[1,439,503,438,513],[1,411,439,382,457],[0,411,428,361,442],[1,426,428,345,432],
            [1,367,427,355,439],[0,367,395,354,411],[1,362,396,353,396],[0,362,366,356,374],[1,350,366,349,384],
            [0,350,362,338,365],[0,361,389,344,392],[0,389,393,373,397],[0,393,428,380,440],[1,357,428,351,475],
            [1,304,358,292,392],[0,305,348,291,350],[1,320,348,306,350]
        ];
        document.getElementById('candles-layer').innerHTML = candles.map(([up, t, b, wt, wb], i) => {
            const x = Math.round(45.7 + i * 12.375);
            return `<path d="M${x + .5} ${wt}V${wb}" stroke="${up ? '#cfcfcf' : '#44699f'}"/>` +
                `<rect x="${x - 5}" y="${t}" width="10" height="${b - t}" fill="${up ? '#fff' : '#629ef0'}"/>`;
        }).join('');

        // Price labels, the current price takes the place of its gridline
        let prices = '';
        for (let p = 7700; p >= 7100; p -= 50) {
            prices += p === 7450
                ? `<div class="relative h-9">
                       <div class="absolute left-px top-[7px] w-[44px] h-6 bg-white text-[#222] leading-3 pt-3 pl-[6px]">02:56:25</div>
                       <div class="absolute left-px top-[7px] w-[38px] h-[14px] bg-[#3d4049] text-white font-medium leading-[14px] pl-[6px]">7.456%</div>
                   </div>`
                : `<span class="h-9 pl-[7px]">${(p / 1000).toFixed(3)}%</span>`;
        }
        document.getElementById('prices').innerHTML = prices;

        const favorites = ['segment', 'profile', 'short', 'target', 'zigzag', 'curve', 'marker', 'ellipse', 'arrow-up', 'brush', 'arrow-down',
            'cycles', 'type', 'grid', 'bubble', 'bars', 'vline', 'long', 'ray', 'fib', 'rect'];
        document.getElementById('favorites').innerHTML = favorites.map(n =>
            `<button aria-label="${n}"><svg class="size-5"><use href="#${n}"/></svg></button>`).join('');

        // [icon, name, hidden]
        const objects = [
            ['candles', 'USDT.D · CRYP...', 0], ['wave', 'All Chart ...', 1], ['wave', 'Vol', 1], ['wave', 'Volumize...', 1],
            ['wave', 'CoC &amp; Bo...', 1], ['wave', 'Smart Ord...', 1], ['wave', 'Vol', 1], ['wave-sort', 'BTC + We...', 1],
            ['folder', 'MTF supply HO...', 0], ['folder', 'Supply an...', 1], ['vline', 'Vertical line', 0], ['vline', 'Vertical line', 0],
            ['vline', 'Vertical line', 0], ['vline', 'Vertical line', 0], ['vline', 'Vertical li...', 1], ['vline', 'Vertical line', 0],
            ['vline', 'Vertical line', 0], ['cycles', 'Time cycles', 0]
        ];
        document.getElementById('objects').innerHTML = objects.map(([icon, name, hidden], i) => `
            <li class="flex items-center pl-1 pr-[5px] ${i === 0 ? 'bg-[#2e2e2e] font-bold text-white' : hidden ? 'text-[#5a5a5a]' : 'font-medium'}">
                <span class="w-[13px] shrink-0 text-[#cfcfcf]">${icon === 'folder' ? '<svg class="size-5 -ml-1"><use href="#chevron-right"/></svg>' : ''}</span>
                <svg class="size-5 shrink-0 text-[#cfcfcf]"><use href="#${icon}"/></svg>
                <span class="ml-[6px] flex-1 whitespace-nowrap">${name}</span>
                ${hidden ? '<button class="text-[#777] mr-[3px]" aria-label="Show"><svg class="size-5"><use href="#eye-off"/></svg></button>' : ''}
                <button class="text-[#777]" aria-label="${i ? 'Remove' : 'Hide'}"><svg class="size-5"><use href="#${i ? 'trash-sm' : 'eye'}"/></svg></button>
            </li>`).join('');
    </script>
</body>
</html>
